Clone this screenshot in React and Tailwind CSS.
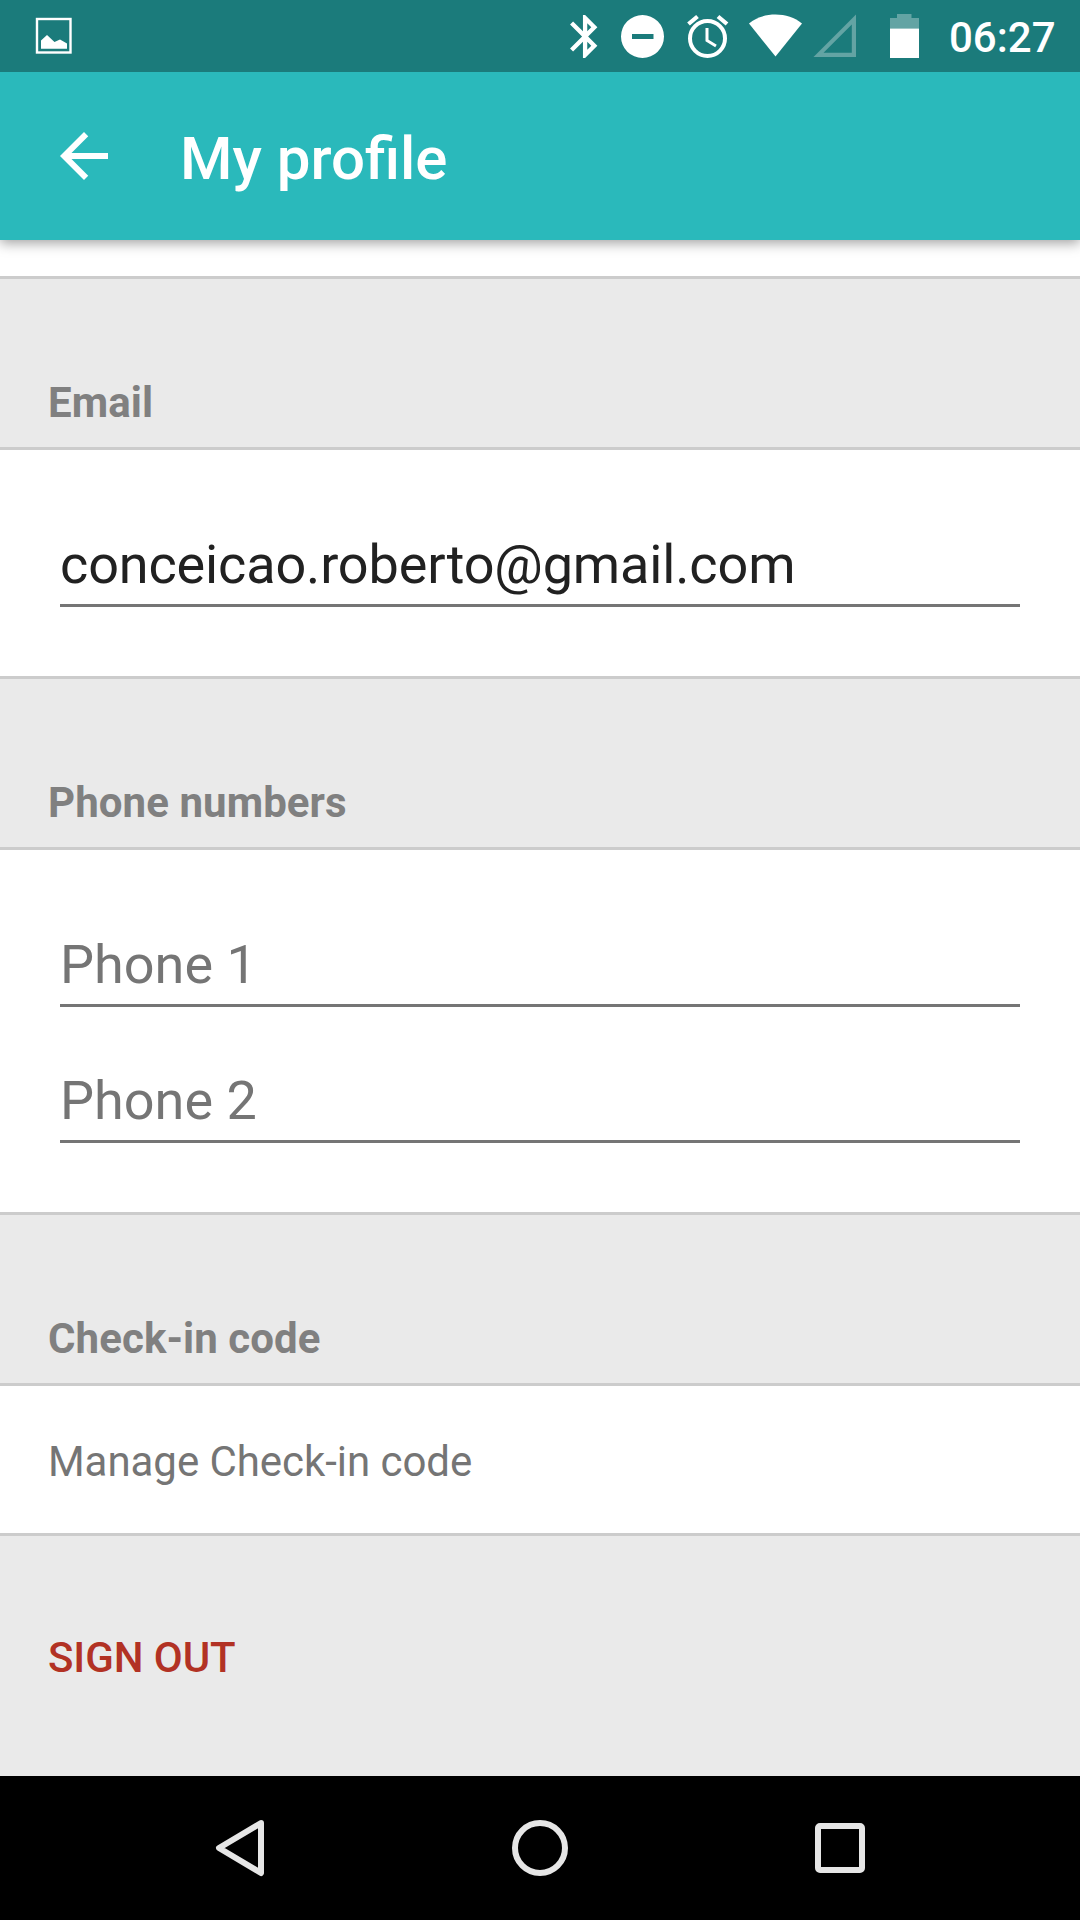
function StatusBar() {
  return (
    <div className="relative z-20 flex h-[72px] items-center bg-[#1b7b7b] text-white">
      <svg width="1080" height="72" viewBox="0 0 1080 72" className="w-[930px] shrink-0" preserveAspectRatio="xMinYMin slice" fill="#fff">
        <rect x="37" y="19" width="33.500" height="33.500" fill="none" stroke="#fff" strokeWidth="2.400" />
        <path d="M41 40.500 47 35l7.500 7 5.500-2.500 7 4V48.700H41Z" />
        <path
          transform="translate(559.300 10.700) scale(2.150)"
          d="M17.710 7.710 12 2h-1v7.590L6.410 5 5 6.410 10.590 12 5 17.590 6.410 19 11 14.410V22h1l5.710-5.710-4.300-4.290 4.300-4.290zM13 5.830l1.880 1.880L13 9.590V5.830zm1.880 10.460L13 18.170v-3.760l1.880 1.880z"
        />
        <path fillRule="evenodd" d="M642.500 15a21.500 21.500 0 1 1 0 43 21.500 21.500 0 0 1 0-43ZM632 34v5h21.500v-5Z" />
        <circle cx="707.500" cy="38.500" r="17.500" fill="none" stroke="#fff" strokeWidth="4" />
        <path d="M707 28v12.500l9 5.500" fill="none" stroke="#fff" strokeWidth="3" />
        <path d="m688.500 24 9-7.500M727 24l-9-7.500" fill="none" stroke="#fff" strokeWidth="4.200" />
        <path d="M749 23.500C763 11.500 788 11.500 802 23.500L775.500 56.500Z" />
        <path fillRule="evenodd" d="M813.500 57 856 14.500V57Zm10-4.200H851.800V24.500Z" fill="#63a4a4" />
        <path d="M890 28.500V18H897V14H911.500V18H919V28.500Z" fill="#63a4a4" />
        <path d="M890 28.500h29V58h-29Z" />
      </svg>
      <span className="ml-[19px] pt-[3px] text-[42px] leading-[72px] font-medium">06:27</span>
    </div>
  );
}

function AppBar() {
  return (
    <header className="relative z-10 flex h-[168px] items-center bg-[#2ab9bb] pl-[48px] text-white shadow-[0_3px_12px_rgba(0,0,0,0.38)]">
      <svg width="72" height="72" viewBox="0 0 24 24" fill="#fff">
        <path d="M20 11H7.830l5.590-5.590L12 4l-8 8 8 8 1.410-1.410L7.830 13H20v-2z" />
      </svg>
      <h1 className="ml-[60px] pt-[5px] text-[60px] leading-[72px] font-medium">My profile</h1>
    </header>
  );
}

function SectionHeader({ children }) {
  return (
    <h2 className="h-[174px] border-y-[3px] border-[#cccccc] bg-[#eaeaea] pt-[97px] pl-[48px] text-[42px] leading-[54px] font-bold tracking-[0.08px] text-[#808080]">
      {children}
    </h2>
  );
}

function Field({ children, filled }) {
  return (
    <div
      className={
        filled
          ? "h-[73px] border-b-[3px] border-[#757575] text-[54px] leading-[62px] tracking-[-0.14px] text-[#212121]"
          : "h-[73px] border-b-[3px] border-[#757575] text-[54px] leading-[62px] text-[#757575]"
      }
    >
      {children}
    </div>
  );
}

function NavBar() {
  return (
    <nav className="flex h-[144px] items-center justify-between bg-black px-[204px]">
      <svg width="72" height="72" viewBox="0 0 72 72" fill="none" stroke="#e6e6e6" strokeWidth="6" strokeLinejoin="round">
        <path d="M57 11 15 36l42 25Z" />
      </svg>
      <svg width="72" height="72" viewBox="0 0 72 72" fill="none" stroke="#e6e6e6" strokeWidth="6">
        <circle cx="36" cy="36" r="25" />
      </svg>
      <svg width="72" height="72" viewBox="0 0 72 72" fill="none" stroke="#e6e6e6" strokeWidth="6">
        <rect x="14" y="14" width="44" height="44" rx="2" />
      </svg>
    </nav>
  );
}

export default function App() {
  return (
    <div className="flex h-[1920px] w-[1080px] flex-col overflow-hidden bg-white font-['Roboto',sans-serif]">
      <StatusBar />
      <AppBar />
      <main className="flex flex-1 flex-col pt-[36px]">
        <SectionHeader>Email</SectionHeader>
        <div className="h-[226px] px-[60px] pt-[84px]">
          <Field filled>conceicao.roberto@gmail.com</Field>
        </div>
        <SectionHeader>Phone numbers</SectionHeader>
        <div className="flex h-[362px] flex-col gap-[63px] px-[60px] pt-[84px]">
          <Field>Phone 1</Field>
          <Field>Phone 2</Field>
        </div>
        <SectionHeader>Check-in code</SectionHeader>
        <div className="h-[147px] pt-[48px] pl-[48px] text-[42px] leading-[56px] tracking-[-0.05px] text-[#757575]">
          Manage Check-in code
        </div>
        <div className="flex-1 border-t-[3px] border-[#cccccc] bg-[#eaeaea] pt-[94px] pl-[48px] text-[42px] leading-[56px] font-medium tracking-[-0.08px] text-[#b23224]">
          SIGN OUT
        </div>
      </main>
      <NavBar />
    </div>
  );
}
